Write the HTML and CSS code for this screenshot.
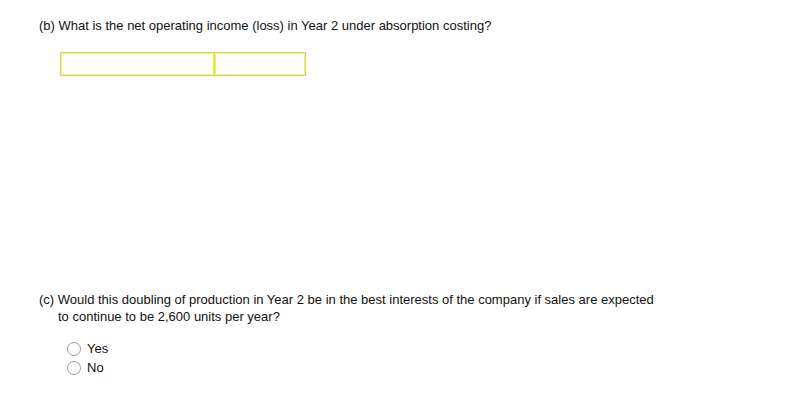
FILE: index.html
```html
<!DOCTYPE html>
<html>
<head>
<meta charset="utf-8">
<link rel="stylesheet" href="styles.css">
</head>
<body>
<div class="page">
  <p class="question">(b) What is the net operating income (loss) in Year 2 under absorption costing?</p>
  <div class="answer-row">
    <div class="cell cell-label"></div>
    <div class="cell cell-value"></div>
  </div>
  <p class="question question-c">(c) Would this doubling of production in Year 2 be in the best interests of the company if sales are expected<br><span class="indent">to continue to be 2,600 units per year?</span></p>
  <div class="options">
    <label class="option"><span class="radio"></span>Yes</label>
    <label class="option"><span class="radio"></span>No</label>
  </div>
</div>
</body>
</html>
```

FILE: styles.css
```css
html, body {
  margin: 0;
  padding: 0;
  background: #fff;
}
.page {
  padding: 17px 0 0 39px;
  font-family: "Liberation Sans", Arial, sans-serif;
  font-size: 13px;
  line-height: 17px;
  color: #111;
}
.question {
  margin: 0;
}
.indent {
  padding-left: 19px;
}
.answer-row {
  display: flex;
  gap: 1px;
  width: 244px;
  height: 22px;
  margin: 18px 0 0 21px;
  border: 1px solid #c8c8c8;
  background: #c8c8c8;
}
.cell {
  box-sizing: border-box;
  height: 22px;
  border: 1px solid #ffff00;
  background: #fff;
}
.cell-label {
  width: 153px;
}
.cell-value {
  flex: 1;
}
.question-c {
  margin-top: 215px;
}
.options {
  display: flex;
  flex-direction: column;
  gap: 2px;
  margin: 15px 0 0 28px;
}
.option {
  display: flex;
  align-items: center;
  gap: 6px;
  height: 17px;
}
.radio {
  box-sizing: border-box;
  width: 14px;
  height: 14px;
  border: 1px solid #9a9a9a;
  border-radius: 50%;
  background: #fff;
}
```
